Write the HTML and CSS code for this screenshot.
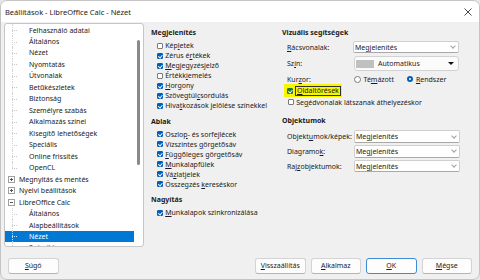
FILE: index.html
```html
<!DOCTYPE html>
<html lang="hu">
<head>
    <meta charset="UTF-8">
    <title>Beállítások - LibreOffice Calc - Nézet</title>
    <link rel="stylesheet" href="styles.css">
</head>
<body>
<div class="window">
    <div class="titlebar">
        <span class="title">Beállítások - LibreOffice Calc - Nézet</span>
        <svg class="close" width="8" height="8" viewBox="0 0 8 8"><path d="M0.5 0.5L7.5 7.5M7.5 0.5L0.5 7.5" stroke="#333" stroke-width="0.9"/></svg>
    </div>

    <div class="main">
        <!-- bal oldali fa -->
        <div class="tree">
            <ul class="tree-list">
                <li class="child">Felhasználó adatai</li>
                <li class="child">Általános</li>
                <li class="child">Nézet</li>
                <li class="child">Nyomtatás</li>
                <li class="child">Útvonalak</li>
                <li class="child">Betűkészletek</li>
                <li class="child">Biztonság</li>
                <li class="child">Személyre szabás</li>
                <li class="child">Alkalmazás színei</li>
                <li class="child">Kisegítő lehetőségek</li>
                <li class="child">Speciális</li>
                <li class="child">Online frissítés</li>
                <li class="child last">OpenCL</li>
                <li class="top"><span class="exp plus"></span>Megnyitás és mentés</li>
                <li class="top"><span class="exp plus"></span>Nyelvi beállítások</li>
                <li class="top"><span class="exp"></span>LibreOffice Calc</li>
                <li class="child">Általános</li>
                <li class="child">Alapbeállítások</li>
                <li class="child sel">Nézet</li>
                <li class="child">Számítás</li>
            </ul>
            <div class="scroll"><div class="thumb"></div></div>
        </div>

        <div class="pages">
            <div class="col col-left">
                <div class="group">
                    <div class="head">Megjelenítés</div>
                    <div class="check"><span class="box"></span><span>Kép<u>l</u>etek</span></div>
                    <div class="check"><span class="box on"></span><span>Zérus é<u>r</u>tékek</span></div>
                    <div class="check"><span class="box on"></span><span><u>M</u>egjegyzésjelző</span></div>
                    <div class="check"><span class="box"></span><span>Értékk<u>i</u>emelés</span></div>
                    <div class="check"><span class="box on"></span><span><u>H</u>orgony</span></div>
                    <div class="check"><span class="box on"></span><span>Szövegtúl<u>c</u>sordulás</span></div>
                    <div class="check"><span class="box on"></span><span>Hiva<u>t</u>kozások jelölése színekkel</span></div>
                </div>
                <div class="group">
                    <div class="head">Ablak</div>
                    <div class="check"><span class="box on"></span><span>Oszlo<u>p</u>- és sorfejlécek</span></div>
                    <div class="check"><span class="box on"></span><span>Vízszintes <u>g</u>örgetősáv</span></div>
                    <div class="check"><span class="box on"></span><span><u>F</u>üggőleges görgetősáv</span></div>
                    <div class="check"><span class="box on"></span><span><u>M</u>unkalapfülek</span></div>
                    <div class="check"><span class="box on"></span><span>Vá<u>z</u>latjelek</span></div>
                    <div class="check"><span class="box on"></span><span>Összegzés <u>k</u>ereséskor</span></div>
                </div>
                <div class="group">
                    <div class="head">Nagyítás</div>
                    <div class="check"><span class="box on"></span><span><u>M</u>unkalapok szinkronizálása</span></div>
                </div>
            </div>

            <div class="col col-right">
                <div class="group">
                    <div class="head">Vizuális segítségek</div>
                    <div class="field">
                        <span class="label"><u>R</u>ácsvonalak:</span>
                        <span class="select"><span>Megjelenítés</span><span class="chev"></span></span>
                    </div>
                    <div class="field color">
                        <span class="label">Sz<u>í</u>n:</span>
                        <span class="colorbtn"><span class="swatch"></span><span>Automatikus</span><span class="tri"></span></span>
                    </div>
                    <div class="field radios">
                        <span class="label">Kur<u>z</u>or:</span>
                        <span class="radio"></span><span>Té<u>m</u>ázott</span>
                        <span class="radio on"></span><span><u>R</u>endszer</span>
                    </div>
                    <div class="check hl-row">
                        <span class="hl"><span class="box on green"></span><span class="focus"><u>O</u>ldaltörések</span></span>
                    </div>
                    <div class="check"><span class="box"></span><span>Se<u>g</u>édvonalak látszanak áthelyezéskor</span></div>
                </div>
                <div class="group objects">
                    <div class="head">Objektumok</div>
                    <div class="field">
                        <span class="label">Objekt<u>u</u>mok/képek:</span>
                        <span class="select"><span>Megjelenítés</span><span class="chev"></span></span>
                    </div>
                    <div class="field">
                        <span class="label">Diagramo<u>k</u>:</span>
                        <span class="select"><span>Megjelenítés</span><span class="chev"></span></span>
                    </div>
                    <div class="field">
                        <span class="label">Raj<u>z</u>objektumok:</span>
                        <span class="select"><span>Megjelenítés</span><span class="chev"></span></span>
                    </div>
                </div>
            </div>
        </div>
    </div>

    <div class="footer">
        <span class="btn"><span><u>S</u>úgó</span></span>
        <div class="btns">
            <span class="btn"><span><u>V</u>isszaállítás</span></span>
            <span class="btn"><span><u>A</u>lkalmaz</span></span>
            <span class="btn ok"><span><u>O</u>K</span></span>
            <span class="btn"><span><u>M</u>égse</span></span>
        </div>
    </div>
</div>
</body>
</html>
```

FILE: styles.css
```css
html,body{
    margin:0;
}
body{
    width:480px;
    height:280px;
    overflow:hidden;
    background:#e6e6e6;
    font-family:"Segoe UI","Noto Sans",sans-serif;
    font-size:7px;
    color:#1b1b1b;
}
u{
    text-decoration-thickness:0.5px;
    text-underline-offset:1px;
}
.window{
    width:480px;
    height:280px;
    box-sizing:border-box;
    border:1px solid #c4c4c4;
    border-radius:7px;
    background:#f0f0f0;
    overflow:hidden;
    display:flex;
    flex-direction:column;
}
.titlebar{
    height:21px;
    flex:none;
    background:#fff;
    display:flex;
    align-items:center;
    justify-content:space-between;
    padding:0 7px 0 4px;
}
.title{
    font-size:7.5px;
}
.main{
    height:225px;
    flex:none;
    display:flex;
    padding:1px 0 0 3px;
}

/* fa */
.tree{
    width:140px;
    height:224px;
    flex:none;
    box-sizing:border-box;
    border:1px solid #c6c6c6;
    border-radius:3px;
    background:#fff;
    display:flex;
    overflow:hidden;
}
.tree-list{
    list-style:none;
    margin:0;
    padding:0.3px 0 0;
    width:129px;
    flex:none;
}
.tree-list li{
    height:11.47px;
    display:flex;
    align-items:center;
    white-space:nowrap;
    position:relative;
}
.tree-list .child{
    padding-left:24px;
}
.tree-list .child::before{
    content:"";
    position:absolute;
    left:7px;
    top:50%;
    width:5px;
    border-top:1px dotted #c8c8c8;
}
.tree-list .child::after{
    content:"";
    position:absolute;
    left:7px;
    top:0;
    bottom:0;
    border-left:1px dotted #d4d4d4;
}
.tree-list .child.last::after{
    bottom:50%;
}
.tree-list .top{
    padding-left:3px;
}
.tree-list .sel{
    background:#0078d4;
    color:#fff;
}
.tree-list .sel::before{
    border-top-color:#cfe3f6;
}
.exp{
    width:5px;
    height:5px;
    border:1px solid #a0a0a0;
    margin-right:4px;
    position:relative;
    flex:none;
}
.exp::before{
    content:"";
    position:absolute;
    left:1px;
    top:2px;
    width:3px;
    height:1px;
    background:#555;
}
.exp.plus::after{
    content:"";
    position:absolute;
    left:2px;
    top:1px;
    width:1px;
    height:3px;
    background:#555;
}
.scroll{
    width:3px;
    margin-left:3px;
    flex:none;
}
.thumb{
    margin-top:16px;
    height:125px;
    border-radius:2px;
    background:#8a8a8a;
}

/* oldalak */
.pages{
    display:flex;
    margin-left:4px;
    padding-top:5.3px;
}
.col-left{
    width:130px;
    padding-left:3px;
    box-sizing:border-box;
}
.col-right{
    width:190px;
    padding-left:4px;
}
.head{
    height:10px;
    line-height:10px;
    font-weight:bold;
    margin-bottom:2.5px;
    white-space:nowrap;
}
.group + .group{
    margin-top:6px;
}
.check{
    height:10px;
    display:flex;
    align-items:center;
    padding-left:5.5px;
    white-space:nowrap;
}
.box{
    width:6px;
    height:6px;
    box-sizing:border-box;
    border:1px solid #7a7a7a;
    border-radius:1px;
    background:#fff;
    margin-right:2.7px;
    position:relative;
    flex:none;
}
.box.on{
    background:#005fb8;
    border-color:#005fb8;
}
.box.on::after{
    content:"";
    position:absolute;
    left:1.3px;
    top:0;
    width:1.5px;
    height:2.6px;
    border-right:1px solid #fff;
    border-bottom:1px solid #fff;
    transform:rotate(40deg);
}
.box.green{
    background:#267a2a;
    border-color:#267a2a;
}

/* jobb oszlop */
.field{
    display:flex;
    align-items:center;
    height:12.5px;
    padding-left:5px;
    white-space:nowrap;
}
.label{
    width:65.5px;
    flex:none;
}
.select{
    width:106px;
    height:12.5px;
    box-sizing:border-box;
    border:1px solid #cfcfcf;
    border-bottom-color:#a8a8a8;
    border-radius:2px;
    background:#fff;
    display:flex;
    align-items:center;
    justify-content:space-between;
    padding:0 3px 0 1.5px;
}
.chev{
    width:3px;
    height:3px;
    border-right:1px solid #a0a0a0;
    border-bottom:1px solid #a0a0a0;
    transform:rotate(45deg);
    margin-top:-2px;
}
.field.color{
    height:14.5px;
    margin-top:3px;
}
.colorbtn{
    width:105px;
    height:14.5px;
    box-sizing:border-box;
    margin-left:1px;
    border:1px solid #d2d2d2;
    border-radius:3px;
    background:#fbfbfb;
    display:flex;
    align-items:center;
    padding:0 4px 0 1.5px;
}
.swatch{
    width:18px;
    height:8px;
    background:#c0c0c0;
    margin-right:4px;
}
.tri{
    margin-left:auto;
    border-left:3px solid transparent;
    border-right:3px solid transparent;
    border-top:3.5px solid #111;
}
.field.radios{
    height:10px;
    margin-top:3.5px;
}
.radio{
    width:5px;
    height:5px;
    border:1px solid #7a7a7a;
    border-radius:50%;
    background:#fff;
    margin:0 3px 0 1px;
    flex:none;
}
.radio.on{
    width:2px;
    height:2px;
    border:2px solid #005fb8;
    margin-left:13px;
}
.hl-row{
    height:13px;
    padding-left:2px;
}
.hl{
    display:flex;
    align-items:center;
    height:13px;
    padding:0 1px 0 3px;
    background:#f7f500;
}
.hl .box{
    margin-right:2px;
}
.focus{
    border:1px solid #333;
    padding:0 1px;
    line-height:8px;
}
.group.objects{
    margin-top:9.2px;
}
.objects .head{
    margin-bottom:3.8px;
}
.objects .field + .field{
    margin-top:2.3px;
}
.objects .select{
    margin-left:1px;
}

/* gombok */
.footer{
    display:flex;
    justify-content:space-between;
    padding:9.7px 7px 0;
}
.btns{
    display:flex;
    gap:5px;
}
.btn{
    width:50.5px;
    height:16px;
    box-sizing:border-box;
    border:1px solid #d3d3d3;
    border-bottom-color:#b5b5b5;
    border-radius:3px;
    background:#fdfdfd;
    display:flex;
    align-items:center;
    justify-content:center;
}
.btn.ok{
    border:1px solid #3d8ad6;
}
```
